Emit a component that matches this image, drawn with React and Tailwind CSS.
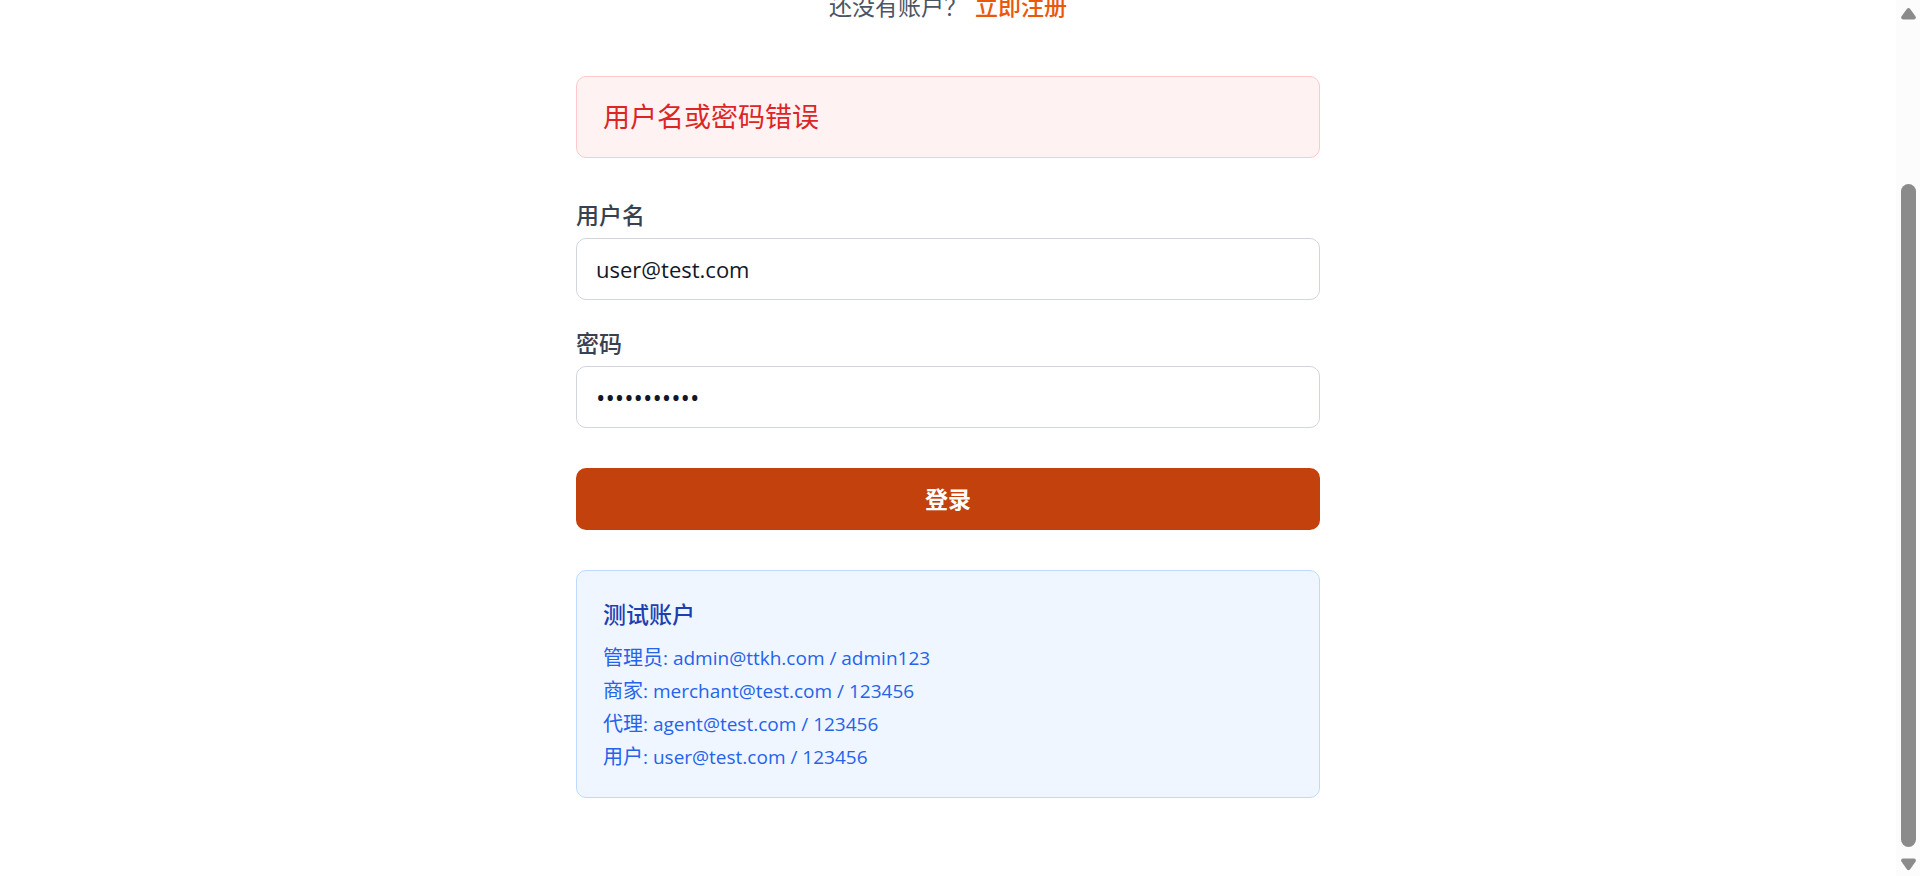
import { useState } from "react";

const accounts = [
  { role: "管理员", login: "admin@ttkh.com", password: "admin123" },
  { role: "商家", login: "merchant@test.com", password: "123456" },
  { role: "代理", login: "agent@test.com", password: "123456" },
  { role: "用户", login: "user@test.com", password: "123456" },
];

function Field({ id, label, type, value, onChange }) {
  return (
    <div>
      <label htmlFor={id} className="mb-1.5 block text-[23px] leading-[34px] font-medium text-[#374151]">
        {label}
      </label>
      <input
        id={id}
        type={type}
        value={value}
        onChange={(e) => onChange(e.target.value)}
        className={`block h-[62px] w-full rounded-[10px] border border-[#d1d5dc] bg-white px-[19px] text-[#111827] outline-none ${
          type === "password" ? "text-[25px]" : "text-[22px]"
        }`}
      />
    </div>
  );
}

function ScrollRail() {
  return (
    <div aria-hidden="true" className="flex w-6 shrink-0 flex-col items-center bg-[#fcfcfc] pt-2 pr-1 pb-1 pl-1">
      <svg viewBox="0 0 15 12" className="h-3 w-[15px] shrink-0 fill-[#8b8b8b]">
        <path d="M6 .8Q7.5-.6 9 .8L14.6 8.6Q15.6 11.2 13 11.4H2Q-.6 11.2.4 8.6Z" />
      </svg>
      <div className="flex w-[15px] grow flex-col pt-[164px] pb-[11px]">
        <div className="grow rounded-full bg-[#8b8b8b]" />
      </div>
      <svg viewBox="0 0 15 14" className="h-[14px] w-[15px] shrink-0 fill-[#8b8b8b]">
        <path d="M6 11.6Q7.5 13 9 11.6L14.6 3.4Q15.6.8 13 .6H2Q-.6.8.4 3.4Z" />
      </svg>
    </div>
  );
}

export default function App() {
  const [username, setUsername] = useState("user@test.com");
  const [password, setPassword] = useState("12345678901");

  return (
    <div className="flex h-screen overflow-hidden bg-white font-['Open_Sans','Noto_Sans_CJK_SC',sans-serif]">
      <main className="flex grow justify-center">
        <div className="-mt-2 w-full max-w-[744px]">
          <p className="flex justify-center gap-2 text-[23px] leading-7 text-[#4b5563]">
            <span>还没有账户？</span>
            <a href="#register" className="font-medium text-[#ea580c]">
              立即注册
            </a>
          </p>

          <div role="alert" className="mt-14 rounded-[10px] border border-[#ffc9c9] bg-[#fef2f2] px-[26px] py-5 text-[27px] leading-10 text-[#dc2626]">
            用户名或密码错误
          </div>

          <form className="mt-10" onSubmit={(e) => e.preventDefault()}>
            <div className="flex flex-col gap-[26px]">
              <Field id="username" label="用户名" type="text" value={username} onChange={setUsername} />
              <Field id="password" label="密码" type="password" value={password} onChange={setPassword} />
            </div>
            <button type="submit" className="mt-10 block h-[62px] w-full rounded-[10px] bg-[#c2410c] text-[23px] font-bold text-white">
              登录
            </button>
          </form>

          <section className="mt-10 rounded-[10px] border border-[#bedbff] bg-[#eff6ff] px-[26px] pt-[26px] pb-6">
            <h3 className="mb-2.5 text-[23px] leading-[34px] font-medium text-[#1e40af]">测试账户</h3>
            <ul className="text-[20px] leading-[33px] text-[#2563eb]">
              {accounts.map((a) => (
                <li key={a.login} className="h-[33px]">
                  {a.role}
                  <span className="text-[19px]">{`: ${a.login} / ${a.password}`}</span>
                </li>
              ))}
            </ul>
          </section>
        </div>
      </main>
      <ScrollRail />
    </div>
  );
}
